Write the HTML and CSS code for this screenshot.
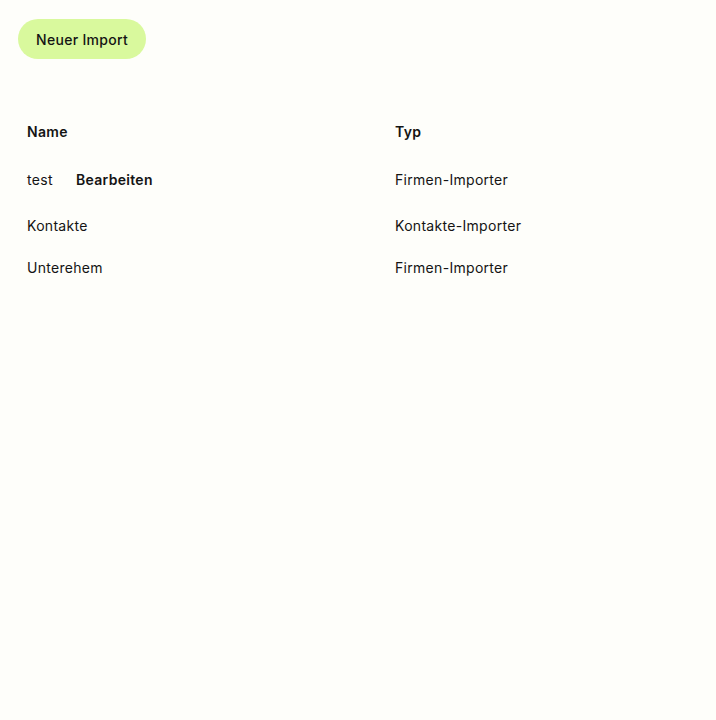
FILE: index.html
```html
<!DOCTYPE html>
<html lang="de">
<head>
  <meta charset="UTF-8">
  <meta name="viewport" content="width=device-width, initial-scale=1.0">
  <title>Importe</title>
  <link rel="stylesheet" href="styles.css">
</head>
<body>
  <div class="page">
    <button class="btn-primary">Neuer Import</button>

    <table class="imports">
      <thead>
        <tr>
          <th class="col-name">Name</th>
          <th>Typ</th>
        </tr>
      </thead>
      <tbody>
        <tr class="row-edit">
          <td>test <button class="btn-ghost">Bearbeiten</button></td>
          <td>Firmen-Importer</td>
        </tr>
        <tr>
          <td>Kontakte</td>
          <td>Kontakte-Importer</td>
        </tr>
        <tr>
          <td>Unterehem</td>
          <td>Firmen-Importer</td>
        </tr>
      </tbody>
    </table>
  </div>
</body>
</html>
```

FILE: styles.css
```css
body {
  margin: 0;
  background-color: #fefefa;
  font-family: Inter, 'Noto Sans', sans-serif;
  font-size: 14px;
  letter-spacing: 0.3px;
  color: #141414;
}
.page {
  padding: 19px 18px;
}
.btn-primary {
  height: 40px;
  padding: 0 18px;
  border: none;
  border-radius: 20px;
  background-color: #d9f99d;
  color: #141414;
  font-family: inherit;
  font-size: 14px;
  font-weight: 500;
  letter-spacing: inherit;
  cursor: pointer;
}
.imports {
  margin-top: 49px;
  width: 100%;
  border-collapse: collapse;
}
.imports th,
.imports td {
  text-align: left;
  padding: 0 9px;
  height: 42px;
}
.imports th {
  height: 46px;
  font-weight: 600;
}
.col-name {
  width: 350px;
}
.row-edit td {
  height: 50px;
}
.btn-ghost {
  margin-left: 7px;
  padding: 8px 12px;
  border: none;
  background: transparent;
  color: #141414;
  font-family: inherit;
  font-size: 14px;
  font-weight: 600;
  letter-spacing: inherit;
  cursor: pointer;
}
```
